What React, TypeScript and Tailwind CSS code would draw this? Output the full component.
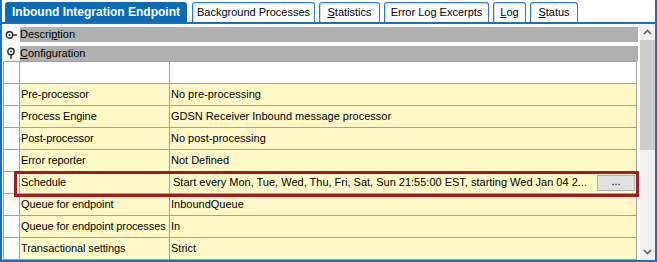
import React from 'react';

const rows: { label: string; value: string; schedule?: boolean }[] = [
  { label: 'Pre-processor', value: 'No pre-processing' },
  { label: 'Process Engine', value: 'GDSN Receiver Inbound message processor' },
  { label: 'Post-processor', value: 'No post-processing' },
  { label: 'Error reporter', value: 'Not Defined' },
  {
    label: 'Schedule',
    value: 'Start every Mon, Tue, Wed, Thu, Fri, Sat, Sun 21:55:00 EST, starting Wed Jan 04 2...',
    schedule: true,
  },
  { label: 'Queue for endpoint', value: 'InboundQueue' },
  { label: 'Queue for endpoint processes', value: 'In' },
  { label: 'Transactional settings', value: 'Strict' },
];

const Tab: React.FC<{ w: string; children: React.ReactNode }> = ({ w, children }) => (
  <div
    className={`${w} h-[20px] mt-[2px] flex items-center justify-center bg-white border border-b-0 border-[#2f7bc4] rounded-t-[3px] shadow-[inset_1px_1px_0_#d8d8d8]`}
  >
    {children}
  </div>
);

const PinSide = () => (
  <svg width="13" height="10" viewBox="0 0 13 10">
    <circle cx="4.5" cy="5" r="3.2" fill="white" stroke="#222" strokeWidth="1.4" />
    <circle cx="4.5" cy="5" r="1" fill="#222" />
    <line x1="7.8" y1="5" x2="12" y2="5" stroke="#222" strokeWidth="1.4" />
  </svg>
);

const PinDown = () => (
  <svg width="10" height="13" viewBox="0 0 10 13">
    <circle cx="5" cy="4.5" r="3.2" fill="white" stroke="#222" strokeWidth="1.4" />
    <circle cx="5" cy="4.5" r="1" fill="#222" />
    <line x1="5" y1="7.8" x2="5" y2="12" stroke="#222" strokeWidth="1.4" />
  </svg>
);

const App: React.FC = () => {
  return (
    <div className="w-[657px] h-[262px] bg-white relative overflow-hidden font-['Liberation_Sans',Arial,sans-serif] text-[11px] text-black leading-none">
      {/* window frame */}
      <div className="h-full border-x-2 border-b-2 border-[#1b6fc0] flex flex-col">
        {/* Tabs */}
        <div className="h-[22px] flex items-start pl-[3px] gap-[4px] shrink-0">
          <div className="w-[182px] h-[20px] mt-[2px] flex items-center justify-center bg-[#0d6ab8] rounded-t-[3px] text-white font-bold text-[12px]">
            Inbound Integration Endpoint
          </div>
          <Tab w="w-[123px] ml-[1px]">Background Processes</Tab>
          <Tab w="w-[61px]">
            <span>
              <span className="underline">S</span>tatistics
            </span>
          </Tab>
          <Tab w="w-[105px]">Error Log Excerpts</Tab>
          <Tab w="w-[33px]">
            <span>
              <span className="underline">L</span>og
            </span>
          </Tab>
          <Tab w="w-[48px]">
            <span>
              <span className="underline">S</span>tatus
            </span>
          </Tab>
        </div>
        <div className="h-[2px] bg-[#1b6fc0] shrink-0" />

        {/* Body */}
        <div className="flex flex-1 min-h-0 gap-[2px]">
          <div className="w-[636px] flex flex-col">
            <div className="flex items-center mt-[3px] h-[16px]">
              <div className="w-[18px] flex justify-center pl-[1px]">
                <PinSide />
              </div>
              <div className="flex-1 h-full bg-[#b0b0b0] flex items-center">
                <span>
                  Descri<span className="underline">p</span>tion
                </span>
              </div>
            </div>
            <div className="flex items-center mt-[4px] h-[16px]">
              <div className="w-[18px] flex justify-center">
                <PinDown />
              </div>
              <div className="flex-1 h-full bg-[#b0b0b0] flex items-center">
                <span>
                  <span className="underline">C</span>onfiguration
                </span>
              </div>
            </div>

            {/* Property grid */}
            <div className="ml-[1px] w-[634px] border-l border-t border-[#a0a0a0] grid grid-cols-[16px_150px_1fr]">
              <div className="h-[22px] border-r border-b border-[#a0a0a0] bg-white" />
              <div className="h-[22px] border-r border-b border-[#a0a0a0] bg-white" />
              <div className="h-[22px] border-r border-b border-[#a0a0a0] bg-white" />
              {rows.map((r) => (
                <React.Fragment key={r.label}>
                  <div className="h-[22px] border-r border-b border-[#a0a0a0] bg-white" />
                  <div className="h-[22px] border-r border-b border-[#a0a0a0] bg-[#fff9c8] flex items-center pl-[1px] whitespace-nowrap tracking-[-0.1px]">
                    {r.label}
                  </div>
                  {r.schedule ? (
                    <div className="h-[22px] border-r border-b border-[#a0a0a0] bg-[#fff9c8] flex items-center pl-[3px] pr-[1px] whitespace-nowrap">
                      <span className="flex-1">{r.value}</span>
                      <button className="w-[38px] h-[16px] bg-[#e1e1e1] border border-[#adadad] flex items-center justify-center text-[11px] pb-[2px]">
                        ...
                      </button>
                    </div>
                  ) : (
                    <div className="h-[22px] border-r border-b border-[#a0a0a0] bg-[#fff9c8] flex items-center pl-[1px] whitespace-nowrap">
                      {r.value}
                    </div>
                  )}
                </React.Fragment>
              ))}
            </div>
          </div>

          {/* Scrollbar */}
          <div className="w-[15px] bg-[#f0f0f0] flex flex-col">
            <div className="h-[16px] flex items-center justify-center">
              <svg width="9" height="6" viewBox="0 0 9 6">
                <path d="M1 5 L4.5 1.5 L8 5" fill="none" stroke="#606060" strokeWidth="1.6" />
              </svg>
            </div>
            <div className="h-[110px] bg-[#cdcdcd]" />
            <div className="flex-1" />
            <div className="h-[16px] flex items-center justify-center">
              <svg width="9" height="6" viewBox="0 0 9 6">
                <path d="M1 1 L4.5 4.5 L8 1" fill="none" stroke="#606060" strokeWidth="1.6" />
              </svg>
            </div>
          </div>
        </div>
      </div>

      {/* Highlight annotation */}
      <div className="absolute left-[14px] top-[171px] w-[625px] h-[26px] border-[3px] border-[#a41c22] pointer-events-none" />
    </div>
  );
};

export default App;
